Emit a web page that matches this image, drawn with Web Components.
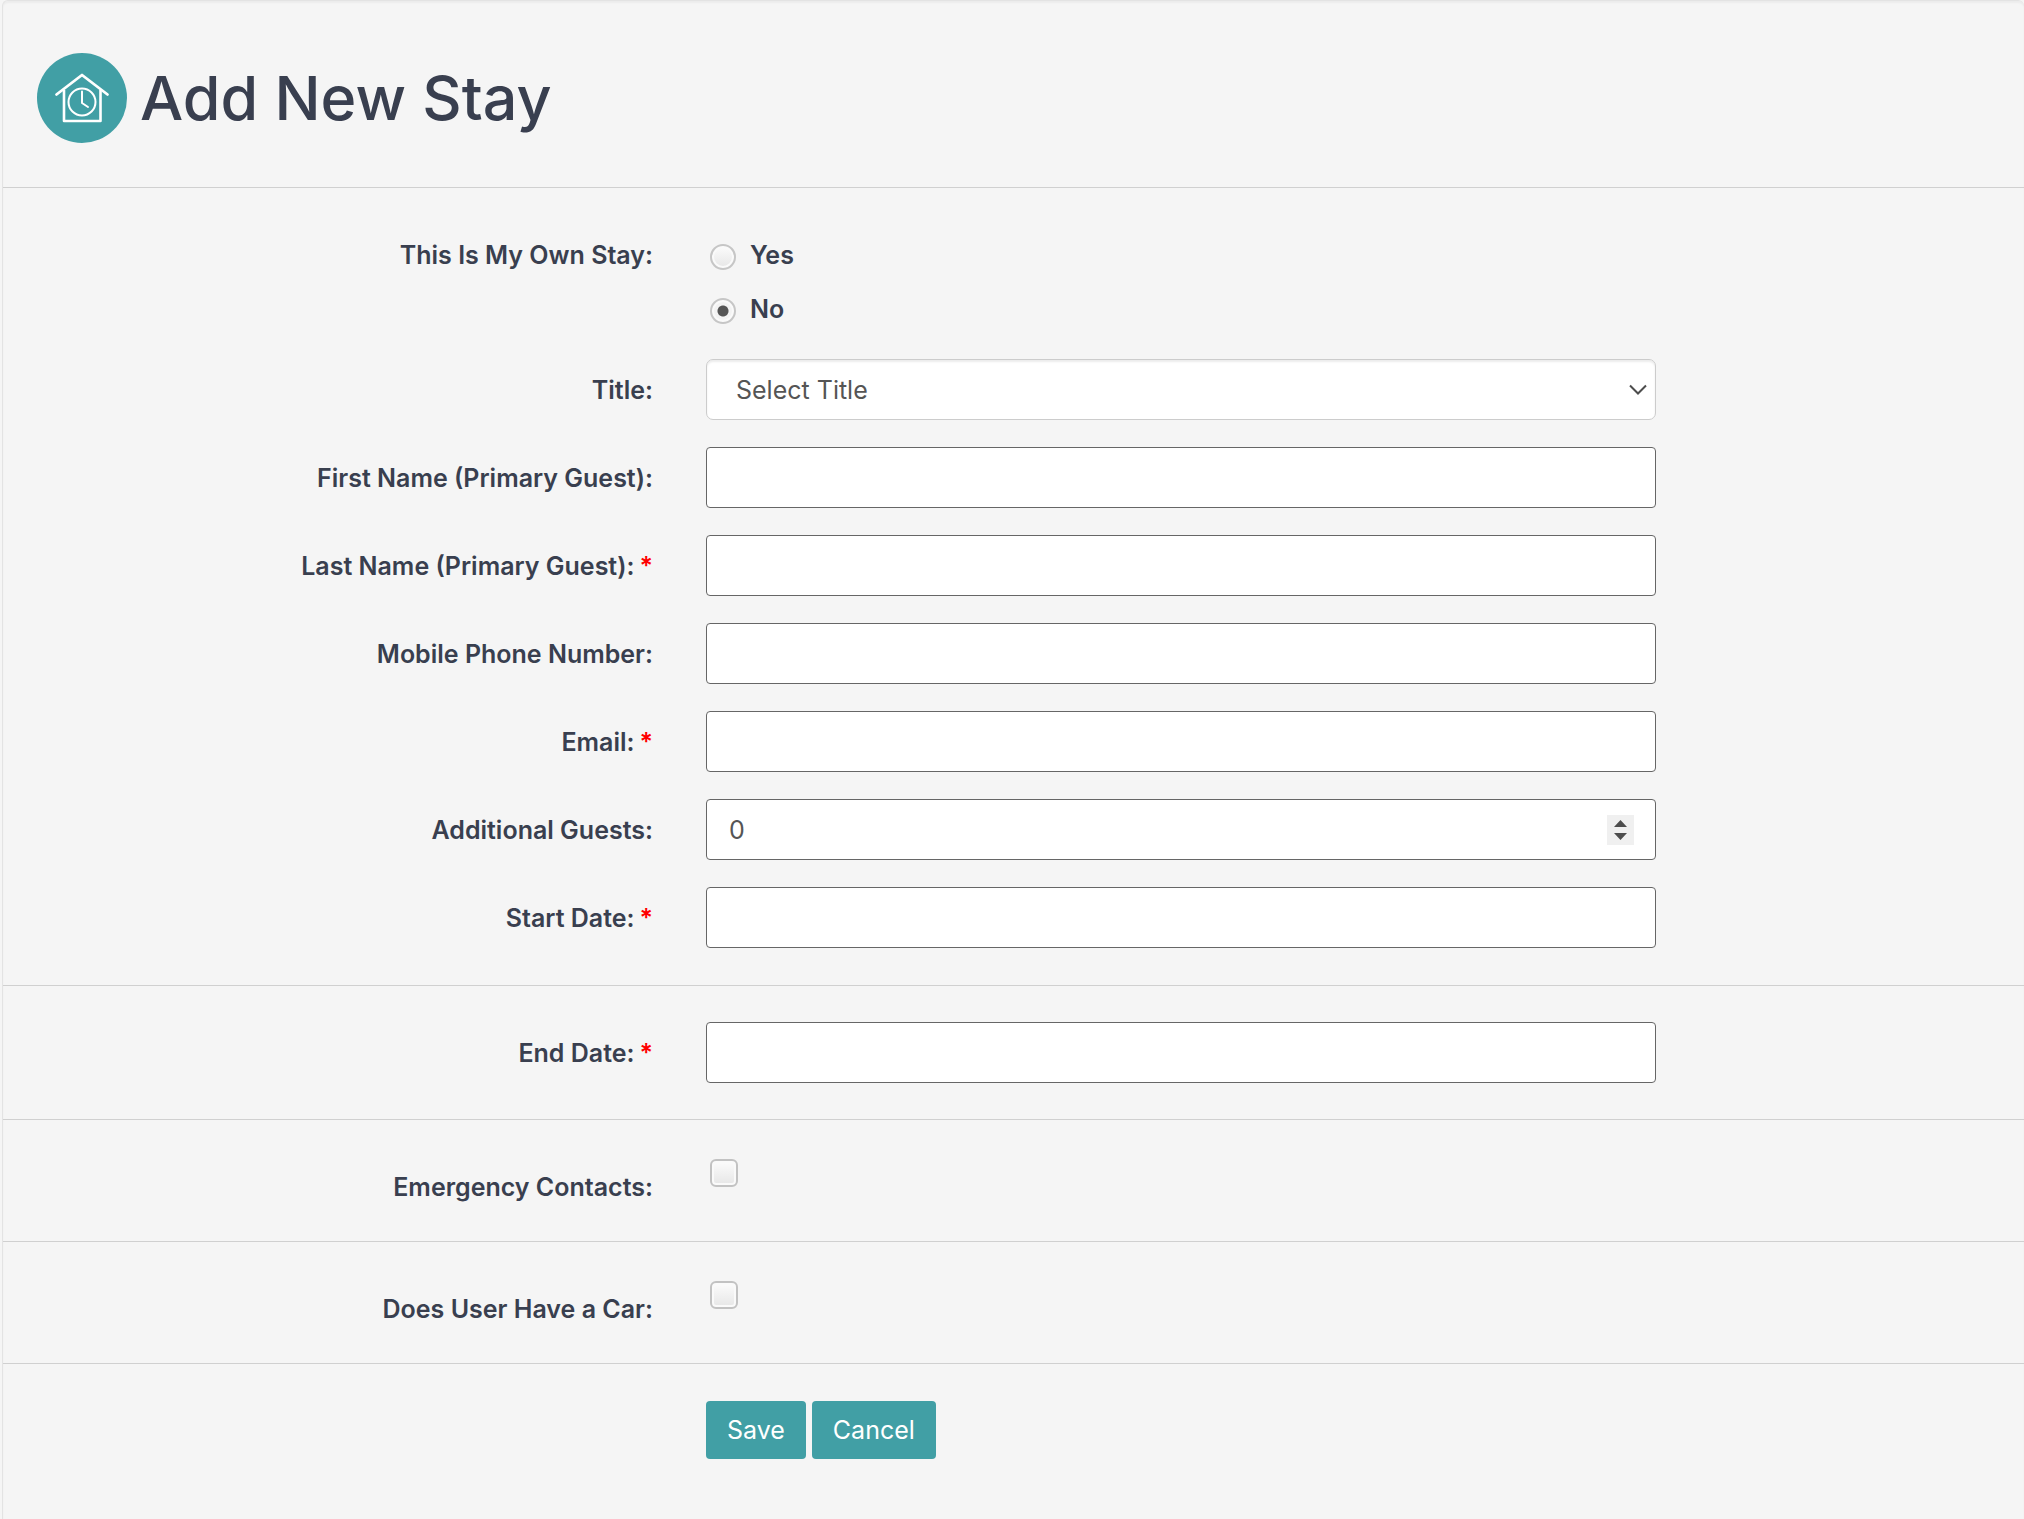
<!DOCTYPE html>
<html lang="en">
<head>
<meta charset="utf-8">
<title>Add New Stay</title>
<style>
  body { margin: 0; background: #f5f5f5; color: #393f4f; font: 400 25px/36px Inter, "Liberation Sans", sans-serif; }
</style>
</head>
<body>
<stay-panel>
  <stay-header slot="header">Add New Stay</stay-header>
  <form-section tall>
    <choice-field label="This Is My Own Stay:" name="own" options="Yes,No" value="No"></choice-field>
    <select-field label="Title:" name="title" options="Select Title,Mr,Mrs,Ms,Dr"></select-field>
    <text-field label="First Name (Primary Guest):" name="first"></text-field>
    <text-field label="Last Name (Primary Guest):" name="last" required></text-field>
    <text-field label="Mobile Phone Number:" name="phone" type="tel"></text-field>
    <text-field label="Email:" name="email" type="email" required></text-field>
    <text-field label="Additional Guests:" name="guests" type="number" value="0"></text-field>
    <text-field label="Start Date:" name="start" required></text-field>
  </form-section>
  <form-section>
    <text-field label="End Date:" name="end" required></text-field>
  </form-section>
  <form-section compact>
    <check-field label="Emergency Contacts:" name="emergency"></check-field>
  </form-section>
  <form-section compact>
    <check-field label="Does User Have a Car:" name="car"></check-field>
  </form-section>
  <form-section last>
    <form-actions>
      <action-button>Save</action-button>
      <action-button>Cancel</action-button>
    </form-actions>
  </form-section>
</stay-panel>

<script>
const define = (name, render) => customElements.define(name, class extends HTMLElement {
  connectedCallback() {
    if (this.shadowRoot) return;
    this.attachShadow({ mode: 'open' }).innerHTML = render(this);
  }
});

/* Shared label / control grid used by every form row */
const rowCss = `
  :host { display: block; }
  * { box-sizing: border-box; }
  .row { display: grid; grid-template-columns: 650fr 950fr 315fr; column-gap: 53px; align-items: start; }
  .name { min-height: 61px; display: flex; align-items: center; justify-content: flex-end; gap: 5px;
          font-weight: 600; text-align: right; }
  .req { color: #f00; }
  input, select { font: inherit; margin: 0; }
  .box { width: 100%; height: 61px; padding: 0 22px; border: 1px solid #666; border-radius: 4px;
         background: #fff; color: #555; grid-area: 1 / 1; }
  .stack { display: grid; align-items: center; }
  .stack svg { grid-area: 1 / 1; justify-self: end; pointer-events: none; }`;
const star = el => el.hasAttribute('required') ? '<span class="req">*</span>' : '';
const attr = (el, n, d = '') => el.getAttribute(n) || d;

define('stay-panel', () => `
  <style>
    :host { display: block; box-sizing: border-box; min-height: 100vh; margin-left: 2px; background: #f5f5f5;
            border: solid #e3e3e3; border-width: 1px 0 0 1px; border-radius: 6px 6px 0 0;
            box-shadow: inset 0 2px 2px rgba(0,0,0,.04); }
  </style>
  <slot name="header"></slot><slot></slot>`);

define('stay-header', () => `
  <style>
    :host { display: flex; align-items: center; gap: 13px; padding: 52px 34px 44px; border-bottom: 1px solid #d0d0d0; }
    svg { width: 90px; height: 90px; flex: none; }
    h1 { margin: 0; font-size: 61px; line-height: 70px; font-weight: 500; }
  </style>
  <svg viewBox="0 0 90 90" fill="none" stroke="#fff" aria-hidden="true">
    <circle cx="45" cy="45" r="45" fill="#419fa5" stroke="none"/>
    <path d="M19.500 41.500 45 22 70.500 41.500" stroke-width="2.800" stroke-linecap="round" stroke-linejoin="round"/>
    <path d="M27 37V68H63.500V37" stroke-width="2.600" stroke-linejoin="round"/>
    <circle cx="45" cy="49" r="13.500" stroke-width="2"/>
    <path d="M45 38.500V50L51 54" stroke-width="2" stroke-linecap="round" stroke-linejoin="round"/>
  </svg>
  <h1><slot></slot></h1>`);

define('form-section', () => `
  <style>
    :host { display: flex; flex-direction: column; gap: 27px; padding: 36px 0; border-bottom: 1px solid #d0d0d0; }
    :host([tall]) { padding-bottom: 37px; }
    :host([compact]) { padding-bottom: 24px; }
    :host([last]) { padding-top: 37px; border-bottom: 0; }
  </style>
  <slot></slot>`);

define('text-field', el => `
  <style>${rowCss}
    input[type=number] { appearance: textfield; }
    input::-webkit-inner-spin-button { appearance: none; margin: 0; }
    svg { margin-right: 22px; }
  </style>
  <div class="row">
    <label class="name" for="c">${attr(el, 'label')}${star(el)}</label>
    <div class="stack">
      <input class="box" id="c" name="${attr(el, 'name')}" type="${attr(el, 'type', 'text')}" value="${attr(el, 'value')}" ${el.hasAttribute('required') ? 'required' : ''}>
      ${attr(el, 'type') === 'number' ? `<svg width="27" height="30" viewBox="0 0 27 30" aria-hidden="true">
        <path fill="#f0f0f0" d="M0 0h27v30H0z"/><path fill="#4d4d4d" d="M7 12 13.500 5 20 12zM7 18h13l-6.500 7z"/></svg>` : ''}
    </div>
  </div>`);

define('select-field', el => `
  <style>${rowCss}
    select.box { appearance: none; padding: 0 29px; border-color: #ccc; border-radius: 7px;
                 box-shadow: inset 0 2px 2px rgba(0,0,0,.075); }
    svg { margin-right: 8px; }
  </style>
  <div class="row">
    <label class="name" for="c">${attr(el, 'label')}</label>
    <div class="stack">
      <select class="box" id="c" name="${attr(el, 'name')}">${attr(el, 'options').split(',').map(o => `<option>${o}</option>`).join('')}</select>
      <svg width="20" height="14" viewBox="0 0 20 14" fill="none" stroke="#4d4d4d" stroke-width="2" aria-hidden="true"><path d="M2 2.500 10 10.500 18 2.500"/></svg>
    </div>
  </div>`);

define('choice-field', el => `
  <style>${rowCss}
    .group { display: flex; flex-direction: column; gap: 8px; padding-top: 8px; }
    .opt { display: flex; align-items: center; align-self: flex-start; gap: 14px; height: 46px; font-weight: 600; }
    input { appearance: none; width: 26px; height: 26px; margin: 4px 0 0 4px; border: 2px solid #c6c6c6; border-radius: 50%;
            background: linear-gradient(#fcfcfc, #e6e6e6) padding-box; box-shadow: inset 0 0 0 2px #fafafa; }
    input:checked { background: radial-gradient(circle, #555 0 5px, #f3f3f3 6px) padding-box; }
  </style>
  <div class="row" role="radiogroup" aria-labelledby="n">
    <div class="name" id="n">${attr(el, 'label')}</div>
    <div class="group">${attr(el, 'options').split(',').map(o => `
      <label class="opt"><input type="radio" name="${attr(el, 'name')}" value="${o}" ${o === attr(el, 'value') ? 'checked' : ''}>${o}</label>`).join('')}
    </div>
  </div>`);

define('check-field', el => `
  <style>${rowCss}
    input { appearance: none; display: block; width: 28px; height: 28px; margin: 3px 4px; border: 2px solid #c2c2c2; border-radius: 6px;
            background: linear-gradient(#fcfcfc, #e6e6e6) padding-box; box-shadow: inset 0 0 0 2px #fafafa; }
    input:checked { background: #419fa5; }
  </style>
  <div class="row">
    <label class="name" for="c">${attr(el, 'label')}</label>
    <div><input type="checkbox" id="c" name="${attr(el, 'name')}"></div>
  </div>`);

define('form-actions', () => `
  <style>${rowCss}
    .buttons { grid-column: 2; display: flex; gap: 6px; }
  </style>
  <div class="row"><div class="buttons"><slot></slot></div></div>`);

define('action-button', () => `
  <style>
    :host { display: block; }
    button { height: 58px; padding: 0 21px; border: 0; border-radius: 4px; background: #419fa5; color: #fff; font: inherit; cursor: pointer; }
  </style>
  <button type="button"><slot></slot></button>`);
</script>
</body>
</html>
